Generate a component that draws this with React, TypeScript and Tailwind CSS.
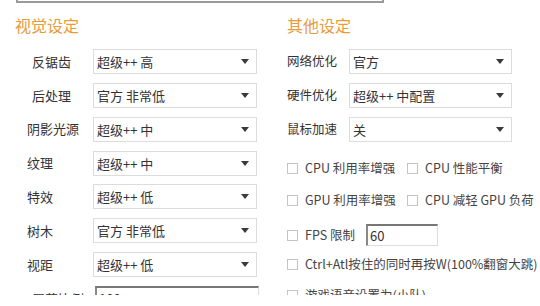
import React from 'react';

const FONT = '"Microsoft YaHei", "Noto Sans CJK SC", "Noto Sans", sans-serif';

type SelectRow = { label: string; value: string; indent: number };

const leftRows: SelectRow[] = [
  { label: '反锯齿', value: '超级++ 高', indent: 32 },
  { label: '后处理', value: '官方 非常低', indent: 32 },
  { label: '阴影光源', value: '超级++ 中', indent: 27 },
  { label: '纹理', value: '超级++ 中', indent: 27 },
  { label: '特效', value: '超级++ 低', indent: 27 },
  { label: '树木', value: '官方 非常低', indent: 27 },
  { label: '视距', value: '超级++ 低', indent: 27 },
];

const rightRows: SelectRow[] = [
  { label: '网络优化', value: '官方', indent: 0 },
  { label: '硬件优化', value: '超级++ 中配置', indent: 0 },
  { label: '鼠标加速', value: '关', indent: 0 },
];

function Arrow() {
  return (
    <svg width="8" height="5" viewBox="0 0 8 5" className="shrink-0">
      <path d="M0 0 L8 0 L4 5 Z" fill="#3a3a3a" />
    </svg>
  );
}

function FakeSelect({ value, width }: { value: string; width: string }) {
  return (
    <div
      className={`${width} h-[25px] flex items-center justify-between pl-[3px] pr-[7px] border border-[#dcdcdc] bg-white text-[13px] text-[#333]`}
    >
      <span className="leading-none">{value}</span>
      <Arrow />
    </div>
  );
}

function Check({ label, className = '' }: { label: string; className?: string }) {
  return (
    <div className={`flex items-center ${className}`}>
      <span className="w-[11px] h-[11px] border border-[#c4c4c4] bg-white shrink-0" />
      <span className="ml-[7px] text-[12.5px] text-[#444] whitespace-nowrap leading-none">{label}</span>
    </div>
  );
}

export default function App() {
  return (
    <div className="w-[540px] h-[306px] bg-white" style={{ fontFamily: FONT }}>
      <div className="h-[295px] overflow-hidden">
        {/* upper field edge */}
        <div className="ml-[16px] w-[368px] h-[3px] border-x-2 border-b-2 border-[#9a9a9a] bg-white" />

        <div className="flex">
          {/* 视觉设定 */}
          <div className="w-[272px] pl-[15px]">
            <div className="mt-[11px] h-[22px] text-[16px] leading-[22px] text-[#e99a3c]">视觉设定</div>
            <div className="mt-[13px] flex flex-col gap-[8.86px]">
              {leftRows.map((r) => (
                <div key={r.label} className="flex items-center">
                  <div
                    className="w-[78px] text-[13px] text-[#333]"
                    style={{ paddingLeft: r.indent - 15 }}
                  >
                    {r.label}
                  </div>
                  <FakeSelect value={r.value} width="w-[164px]" />
                </div>
              ))}
              <div className="flex items-center">
                <div className="w-[78px] pl-[17px] text-[13px] text-[#333] whitespace-nowrap">屏幕比例</div>
                <div className="w-[164px] h-[25px] ml-[2px] flex items-center pl-[2px] border-t-2 border-l-2 border-t-[#777] border-l-[#888] border-r border-b border-r-[#ddd] border-b-[#ddd] text-[13px] text-[#333]">
                  100
                </div>
              </div>
            </div>
          </div>

          {/* 其他设定 */}
          <div className="flex-1 pl-[15px]">
            <div className="mt-[11px] h-[22px] text-[16px] leading-[22px] text-[#e99a3c]">其他设定</div>
            <div className="mt-[13px] flex flex-col gap-[8.86px]">
              {rightRows.map((r) => (
                <div key={r.label} className="flex items-center">
                  <div className="w-[62px] text-[12.5px] text-[#333]">{r.label}</div>
                  <FakeSelect value={r.value} width="w-[163px]" />
                </div>
              ))}
            </div>

            <div className="mt-[11px] flex flex-col">
              <div className="h-[32px] flex items-center">
                <Check label="CPU 利用率增强" className="w-[120px]" />
                <Check label="CPU 性能平衡" />
              </div>
              <div className="h-[32px] flex items-center">
                <Check label="GPU 利用率增强" className="w-[120px]" />
                <Check label="CPU 减轻 GPU 负荷" />
              </div>
              <div className="h-[37px] flex items-center">
                <Check label="FPS 限制" className="w-[79px]" />
                <div className="w-[72px] h-[22px] flex items-center pl-[2px] border-t-2 border-l-2 border-t-[#777] border-l-[#888] border-r border-b border-r-[#ddd] border-b-[#ddd] text-[13px] text-[#333]">
                  60
                </div>
              </div>
              <div className="h-[22px] flex items-center">
                <Check label="Ctrl+Atl按住的同时再按W(100%翻窗大跳)" />
              </div>
              <div className="h-[40px] flex items-center">
                <Check label="游戏语音设置为(小队)" />
              </div>
            </div>
          </div>
        </div>
      </div>
    </div>
  );
}
